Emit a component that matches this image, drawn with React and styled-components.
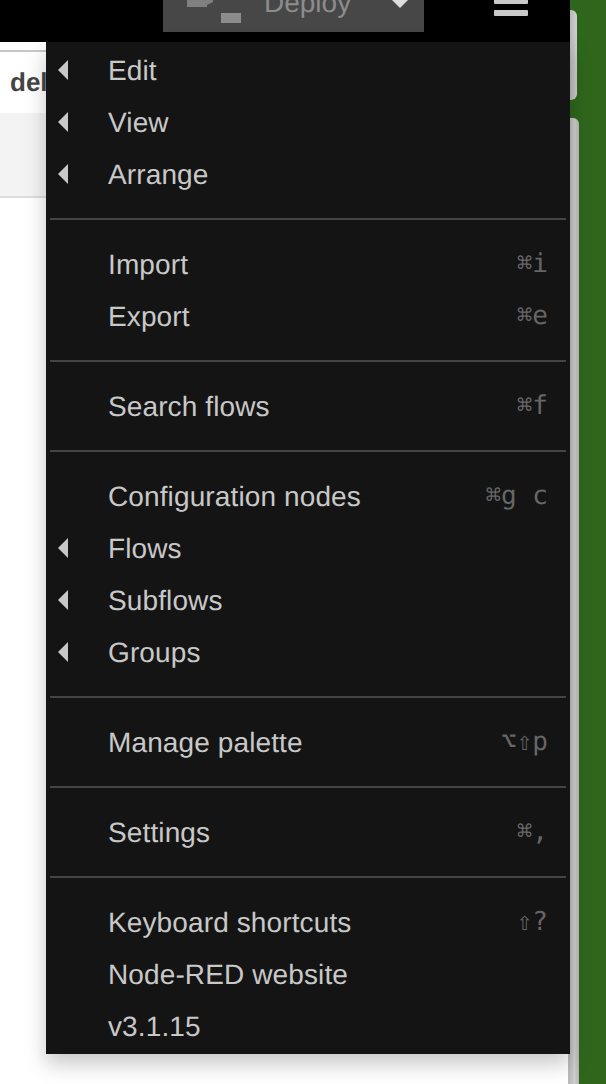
import React from 'react';
import styled, { createGlobalStyle } from 'styled-components';

const GlobalStyle = createGlobalStyle`
  html, body {
    margin: 0;
    padding: 0;
    background: #fff;
    overflow: hidden;
  }
`;

const Page = styled.div`
  position: relative;
  display: flex;
  width: 606px;
  height: 1084px;
  overflow: hidden;
  background: #fff;
  font-family: "Liberation Sans", Arial, sans-serif;
  text-rendering: geometricPrecision;
`;

const Main = styled.div`
  width: 570px;
  flex: none;
  display: flex;
  flex-direction: column;
`;

const Header = styled.header`
  height: 42px;
  flex: none;
  background: #000;
  position: relative;
  overflow: hidden;
`;

const DeployButton = styled.div`
  margin-left: 163px;
  width: 261px;
  height: 32px;
  background: #474747;
  display: flex;
  align-items: flex-start;
  color: #8c8c8c;
  font-size: 28px;
  position: relative;
`;

const DeployIcon = styled.svg`
  width: 60px;
  height: 32px;
  margin-left: 20px;
  flex: none;
`;

const DeployLabel = styled.span`
  margin-left: 21px;
  margin-top: -13px;
  line-height: 32px;
`;

const DeployCaret = styled.svg`
  position: absolute;
  left: 228px;
  top: 0;
  width: 18px;
  height: 8px;
`;

const MenuIcon = styled.div`
  position: absolute;
  left: 494px;
  top: -2px;
  width: 34px;
  display: flex;
  flex-direction: column;
  gap: 6px;
`;

const MenuBar = styled.span`
  display: block;
  height: 6px;
  border-radius: 1px;
  background: #c9c9c9;
`;

const Workspace = styled.div`
  flex: 1;
  background: #fff;
  border-right: 2px solid #bbb;
  box-sizing: border-box;
  padding-top: 8px;
`;

const TabBar = styled.div`
  height: 63px;
  border-top: 2px solid #c8c8c8;
  box-sizing: border-box;
  padding-left: 10px;
  font-size: 26px;
  font-weight: 700;
  color: #444;
  line-height: 60px;
`;

const Toolbar = styled.div`
  height: 85px;
  background: #f3f3f3;
  border-bottom: 2px solid #ddd;
  box-sizing: border-box;
`;

const Sidebar = styled.div`
  flex: 1;
  background: #2f661c;
  padding-top: 10px;
  display: flex;
  flex-direction: column;
`;

const SideTabTop = styled.div`
  width: 7px;
  height: 90px;
  flex: none;
  background: linear-gradient(90deg, #b8b8b8, #cfcfcf);
  border-radius: 0 6px 6px 0;
`;

const SideTabBottom = styled.div`
  width: 9px;
  flex: 1;
  margin-top: 18px;
  background: linear-gradient(90deg, #bbb, #cfcfcf, #b5b5b5);
  border-radius: 0 6px 0 0;
`;

const Menu = styled.div`
  position: absolute;
  left: 46px;
  top: 42px;
  width: 524px;
  height: 1012px;
  background: #141414;
  box-shadow: 0 10px 20px rgba(0, 0, 0, 0.22);
  box-sizing: border-box;
  padding: 2px 4px 0;
  font-size: 28px;
  color: #c8c8c8;
`;

const Item = styled.div`
  height: 52px;
  position: relative;
  padding-left: 58px;
  padding-right: 18px;
  display: flex;
  align-items: center;
  justify-content: space-between;
`;

const Label = styled.span`
  padding-top: 2px;
  letter-spacing: 0.12px;
`;

const Arrow = styled.i`
  position: absolute;
  left: 8px;
  top: 16px;
  width: 0;
  height: 0;
  border-top: 10px solid transparent;
  border-bottom: 10px solid transparent;
  border-right: 10px solid #c8c8c8;
`;

const Shortcut = styled.span`
  font-family: "DejaVu Sans Mono", "Liberation Mono", monospace;
  font-size: 26px;
  color: #666;
  white-space: pre;
`;

const Divider = styled.div`
  height: 2px;
  background: #444;
  margin: 18px 0 18px;
  width: 516px;
`;

const groups = [
  [
    { label: 'Edit', arrow: true },
    { label: 'View', arrow: true },
    { label: 'Arrange', arrow: true },
  ],
  [
    { label: 'Import', keys: '⌘i' },
    { label: 'Export', keys: '⌘e' },
  ],
  [{ label: 'Search flows', keys: '⌘f' }],
  [
    { label: 'Configuration nodes', keys: '⌘g c' },
    { label: 'Flows', arrow: true },
    { label: 'Subflows', arrow: true },
    { label: 'Groups', arrow: true },
  ],
  [{ label: 'Manage palette', keys: '⌥⇧p' }],
  [{ label: 'Settings', keys: '⌘,' }],
  [
    { label: 'Keyboard shortcuts', keys: '⇧?' },
    { label: 'Node-RED website' },
    { label: 'v3.1.15' },
  ],
];

export default function App() {
  return (
    <Page>
      <GlobalStyle />
      <Main>
        <Header>
          <DeployButton>
            <DeployIcon viewBox="0 0 60 32">
              <rect x="4" y="-6" width="20" height="13" fill="#808080" />
              <path d="M24 0h6v2l-6 3z" fill="#808080" />
              <rect x="38" y="13" width="20" height="10" fill="#8c8c8c" />
            </DeployIcon>
            <DeployLabel>Deploy</DeployLabel>
            <DeployCaret viewBox="0 0 18 8">
              <path d="M1 0h16L9 8z" fill="#ddd" />
            </DeployCaret>
          </DeployButton>
          <MenuIcon>
            <MenuBar />
            <MenuBar />
          </MenuIcon>
        </Header>
        <Workspace>
          <TabBar>del</TabBar>
          <Toolbar />
        </Workspace>
      </Main>
      <Sidebar>
        <SideTabTop />
        <SideTabBottom />
      </Sidebar>
      <Menu>
        {groups.map((group, i) => (
          <React.Fragment key={i}>
            {i > 0 && <Divider />}
            {group.map((item) => (
              <Item key={item.label}>
                {item.arrow && <Arrow />}
                <Label>{item.label}</Label>
                {item.keys && <Shortcut>{item.keys}</Shortcut>}
              </Item>
            ))}
          </React.Fragment>
        ))}
      </Menu>
    </Page>
  );
}
